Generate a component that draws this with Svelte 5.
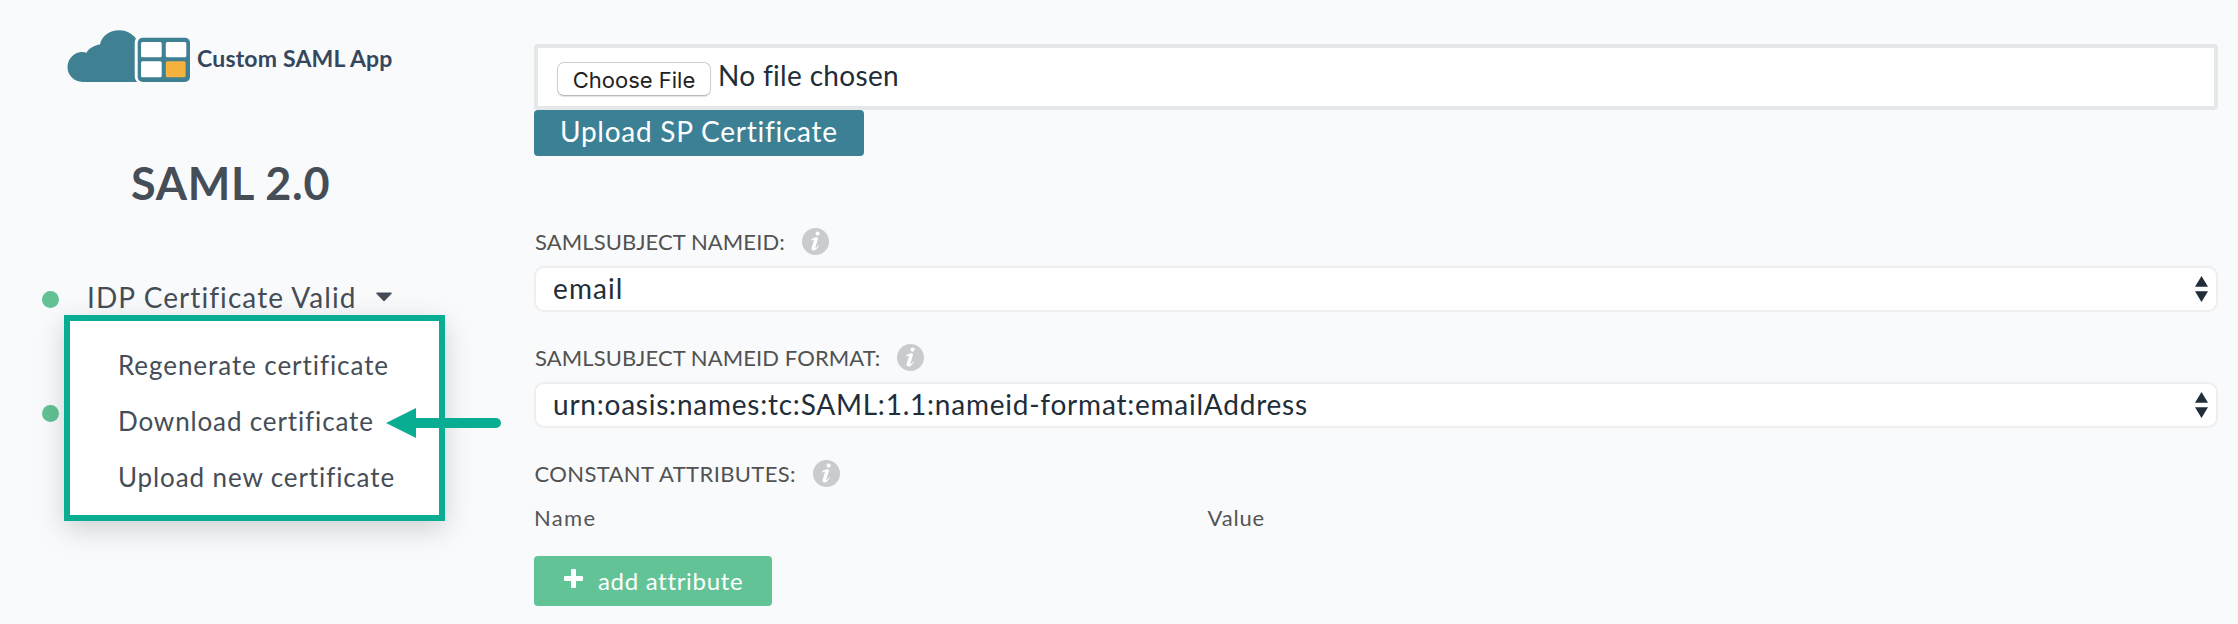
<script>
  const menuItems = [
    { label: 'Regenerate certificate', spacing: 0.93 },
    { label: 'Download certificate', spacing: 0.86 },
    { label: 'Upload new certificate', spacing: 0.89 }
  ];
  const fields = [
    { label: 'SAMLSUBJECT NAMEID:', labelSpacing: 0.1, value: 'email', spacing: 1.1 },
    {
      label: 'SAMLSUBJECT NAMEID FORMAT:',
      labelSpacing: 0.09,
      value: 'urn:oasis:names:tc:SAML:1.1:nameid-format:emailAddress',
      spacing: 0.77
    }
  ];
</script>

{#snippet info()}
  <svg class="info" viewBox="0 0 27 27" aria-hidden="true">
    <circle cx="13.5" cy="13.5" r="13.5" fill="#c9cbcf" />
    <circle cx="15.6" cy="5.6" r="2.1" fill="#fff" />
    <path
      d="M9.2 11.6C10.8 10.2 12.6 9.4 14.2 9.3C15.7 9.2 16.2 10.1 15.8 11.6L13.4 19.2C13.2 20 13.6 20.2 14.2 19.7C15 19.1 15.7 18.2 16.4 17.2L17.1 17.7C15.6 20.3 13.6 22.5 11.4 22.5C9.7 22.5 9.2 21.3 9.7 19.6L11.9 12.6C12.1 11.7 11.7 11.5 11.1 11.8C10.5 12 10 12.4 9.6 12.8Z"
      fill="#fff"
    />
  </svg>
{/snippet}

<div class="page">
  <aside>
    <div class="brand">
      <svg width="123" height="52" viewBox="0 0 123 52" aria-hidden="true">
        <path
          d="M15.5 52A15 15 0 0 1 15.5 22Q17.7 22 19.5 22.7C22 18.2 27.5 15.2 33 14.5C34.5 6 42.5 0.3 52.3 0.3C59 0.3 65.3 3.5 69 8.7Q67.7 10 67.7 13V46Q67.7 50 70.5 52Z"
          fill="#3f8092"
        />
        <path d="M69 9Q67.8 11 68.3 14V46Q68.5 50 71 52H74V7.5Z" fill="#fff" />
        <rect x="70.7" y="7.8" width="52.3" height="44.2" rx="5" fill="#3f8092" />
        <rect x="74" y="12" width="20.7" height="15.2" rx="1.5" fill="#fff" />
        <rect x="98.8" y="12" width="20.5" height="15.2" rx="1.5" fill="#fff" />
        <rect x="74" y="31.2" width="20.7" height="16" rx="1.5" fill="#fff" />
        <rect x="98.8" y="31.2" width="19.8" height="16" rx="1.5" fill="#f5b23f" />
      </svg>
      <span>Custom SAML App</span>
    </div>

    <h1>SAML 2.0</h1>

    <div class="status">
      <i class="dot"></i>
      <span class="status-text">IDP Certificate Valid</span>
      <svg class="caret" width="16" height="10" viewBox="0 0 16 10" aria-hidden="true">
        <path d="M1 0.5H15Q16.3 0.8 15.3 2L9 8.6Q8 9.6 7 8.6L0.7 2Q-0.3 0.8 1 0.5Z" fill="#454d57" />
      </svg>
      <div class="menu">
        {#each menuItems as item}
          <div class="item" style="letter-spacing: {item.spacing}px">{item.label}</div>
        {/each}
        <svg class="arrow" width="116" height="30" viewBox="0 0 116 30" aria-hidden="true">
          <path d="M0 15L30 0V10H110A5 5 0 0 1 110 20H30V30Z" fill="#09ae92" />
        </svg>
      </div>
    </div>
    <div class="status second"><i class="dot"></i></div>
  </aside>

  <main>
    <div class="file">
      <span class="choose">Choose File</span>
      <span class="none">No file chosen</span>
    </div>
    <div class="upload">Upload SP Certificate</div>

    <div class="fields">
      {#each fields as field}
        <div class="field">
          <div class="label">
            <span style="letter-spacing: {field.labelSpacing}px">{field.label}</span>
            {@render info()}
          </div>
          <div class="select">
            <span style="letter-spacing: {field.spacing}px">{field.value}</span>
            <svg width="13" height="26" viewBox="0 0 13 26" aria-hidden="true">
              <path d="M6.5 0L13 10.8H0ZM0 15.2H13L6.5 26Z" fill="#212d38" />
            </svg>
          </div>
        </div>
      {/each}
    </div>

    <div class="label constant">
      <span>CONSTANT ATTRIBUTES:</span>
      {@render info()}
    </div>
    <div class="columns"><span class="name">Name</span><span>Value</span></div>
    <div class="add">
      <svg width="19" height="19" viewBox="0 0 19 19" aria-hidden="true">
        <path
          d="M8 0H11Q12 0 12 1V7H18Q19 7 19 8V11Q19 12 18 12H12V18Q12 19 11 19H8Q7 19 7 18V12H1Q0 12 0 11V8Q0 7 1 7H7V1Q7 0 8 0Z"
          fill="#fff"
        />
      </svg>
      <span>add attribute</span>
    </div>
  </main>
</div>

<style>
  :global(body) {
    background: #f9fafc;
  }
  .page {
    box-sizing: border-box;
    display: grid;
    grid-template-columns: 534px 1684px;
    height: 624px;
    overflow: hidden;
    background: #f9fafc;
    font-family: Lato, 'Open Sans', sans-serif;
    white-space: nowrap;
    color: #454d57;
  }
  aside {
    padding-top: 30px;
  }
  .brand {
    display: flex;
    gap: 7px;
    height: 52px;
    padding-left: 67px;
    font-size: 23px;
    font-weight: 700;
    line-height: 56px;
    letter-spacing: 0.18px;
    color: #35475c;
  }
  h1 {
    margin: 71px 0 0;
    padding-left: 131px;
    font-size: 45px;
    font-weight: 700;
    line-height: 60px;
    letter-spacing: 0.7px;
  }
  .status {
    position: relative;
    display: flex;
    align-items: center;
    height: 40px;
    margin-top: 64px;
    padding-left: 42px;
    font-size: 28px;
    letter-spacing: 1.08px;
  }
  .status.second {
    margin-top: 74px;
  }
  .dot {
    width: 17px;
    height: 17px;
    margin-top: 5px;
    border-radius: 50%;
    background: #62c295;
  }
  .status-text {
    margin-left: 28px;
    width: 267px;
  }
  .caret {
    margin-left: 22px;
  }
  .menu {
    box-sizing: border-box;
    position: absolute;
    z-index: 1;
    left: 64px;
    top: 38px;
    width: 381px;
    height: 206px;
    padding: 16px 0 0 48px;
    border: 6px solid #09ae92;
    background: #fff;
    box-shadow: 0 8px 26px rgba(0, 0, 0, 0.17);
    font-size: 26px;
  }
  .item {
    line-height: 56px;
    height: 56px;
  }
  .arrow {
    position: absolute;
    left: 316px;
    top: 87px;
  }
  main {
    padding-top: 44px;
  }
  .file {
    box-sizing: border-box;
    display: flex;
    height: 66px;
    padding: 14px 0 0 19px;
    border: 4px solid #e4e8e9;
    border-radius: 4px;
    background: #fff;
    color: #212d38;
  }
  .choose {
    box-sizing: border-box;
    width: 154px;
    height: 34px;
    border: 1px solid #cfcfcf;
    border-bottom-color: #b8b8b8;
    border-radius: 7px;
    box-shadow: 0 1px 1px rgba(0, 0, 0, 0.12);
    font: 22px/35px Inter, sans-serif;
    text-align: center;
    color: #222;
  }
  .none {
    margin: -5px 0 0 7px;
    font-size: 28px;
    line-height: 36px;
    letter-spacing: 0.32px;
  }
  .upload {
    box-sizing: border-box;
    width: 330px;
    height: 46px;
    padding-left: 26px;
    border-radius: 4px;
    background: #3c8095;
    color: #fff;
    font-size: 28px;
    line-height: 43px;
    letter-spacing: 0.75px;
  }
  .fields {
    display: grid;
    gap: 26px;
    margin-top: 66px;
  }
  .label {
    display: flex;
    align-items: center;
    gap: 17px;
    height: 39px;
    padding-left: 1px;
    font-size: 22px;
    color: #525252;
  }
  .info {
    width: 27px;
    height: 27px;
  }
  .select {
    box-sizing: border-box;
    display: flex;
    align-items: center;
    justify-content: space-between;
    height: 46px;
    margin-top: 5px;
    padding: 0 8px 0 17px;
    border: 2px solid #eee;
    border-radius: 10px;
    background: #fff;
    font-size: 28px;
    line-height: 42px;
    color: #212d38;
  }
  .select span {
    margin-top: -3px;
  }
  .constant {
    margin-top: 26px;
    padding-left: 0.5px;
    letter-spacing: 0.38px;
  }
  .columns {
    display: grid;
    grid-template-columns: 40% 60%;
    margin-top: 10px;
    font-size: 22px;
    line-height: 29px;
    letter-spacing: 0.83px;
    color: #555;
  }
  .columns .name {
    letter-spacing: 1.3px;
  }
  .add {
    box-sizing: border-box;
    display: flex;
    width: 238px;
    height: 50px;
    margin-top: 24px;
    padding-left: 30px;
    border-radius: 4px;
    background: #62c397;
    color: #fff;
    font-size: 24px;
    line-height: 50px;
    letter-spacing: 0.68px;
  }
  .add svg {
    margin: 13px 15px 0 0;
  }
</style>
